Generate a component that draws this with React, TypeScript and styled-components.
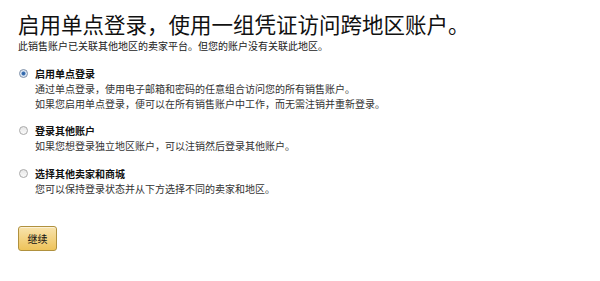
import styled, { createGlobalStyle } from "styled-components";

const GlobalStyle = createGlobalStyle`
  body {
    margin: 0;
    background: #ffffff;
    font-family: "Noto Sans CJK SC", "Liberation Sans", sans-serif;
    color: #111;
  }
`;

const Page = styled.div`
  padding: 11px 18px 0 18px;
`;

const Title = styled.h1`
  margin: 0;
  font-size: 21.5px;
  line-height: 26px;
  font-weight: 400;
  color: #111;
  white-space: nowrap;
`;

const Subtitle = styled.p`
  margin: 2px 0 0 0;
  font-size: 10px;
  line-height: 14px;
  color: #222;
`;

const OptionList = styled.div`
  display: flex;
  flex-direction: column;
  gap: 12.5px;
  margin-top: 12.5px;
`;

const Option = styled.label`
  display: grid;
  grid-template-columns: 17px 1fr;
  align-items: start;
  cursor: pointer;
`;

const RadioSlot = styled.div`
  height: 15px;
  display: flex;
  align-items: center;
  padding-left: 1px;
`;

interface RadioProps {
  $checked?: boolean;
}

const Radio = styled.span<RadioProps>`
  width: 9px;
  height: 9px;
  border-radius: 50%;
  box-sizing: border-box;
  border: 1px solid ${({ $checked }) => ($checked ? "#7d8fa8" : "#a9a9a9")};
  background: ${({ $checked }) =>
    $checked
      ? "radial-gradient(circle at 50% 50%, #2e5f9e 0, #3c74b8 1.6px, #d7e3f1 2.4px, #f4f6fa 100%)"
      : "linear-gradient(#e6e6e6, #fbfbfb)"};
`;

const Body = styled.div`
  display: flex;
  flex-direction: column;
`;

const Label = styled.div`
  font-size: 10px;
  line-height: 15px;
  font-weight: 700;
  color: #111;
`;

const Desc = styled.div`
  font-size: 10px;
  line-height: 15px;
  color: #333;
`;

const Button = styled.button`
  margin-top: 30px;
  width: 39px;
  height: 25px;
  padding: 0;
  border: 1px solid #b0913e;
  border-radius: 3px;
  background: linear-gradient(#f8e3ad, #eec35a);
  box-shadow: inset 0 1px 0 rgba(255, 255, 255, 0.5);
  font-family: "Noto Sans CJK SC", sans-serif;
  font-size: 10px;
  color: #111;
  cursor: pointer;
`;

interface OptionItem {
  label: string;
  lines: string[];
  checked?: boolean;
}

const options: OptionItem[] = [
  {
    label: "启用单点登录",
    lines: [
      "通过单点登录，使用电子邮箱和密码的任意组合访问您的所有销售账户。",
      "如果您启用单点登录，便可以在所有销售账户中工作，而无需注销并重新登录。",
    ],
    checked: true,
  },
  {
    label: "登录其他账户",
    lines: ["如果您想登录独立地区账户，可以注销然后登录其他账户。"],
  },
  {
    label: "选择其他卖家和商城",
    lines: ["您可以保持登录状态并从下方选择不同的卖家和地区。"],
  },
];

const App = () => {
  return (
    <Page>
      <GlobalStyle />
      <Title>启用单点登录，使用一组凭证访问跨地区账户。</Title>
      <Subtitle>此销售账户已关联其他地区的卖家平台。但您的账户没有关联此地区。</Subtitle>
      <OptionList>
        {options.map((o) => (
          <Option key={o.label}>
            <RadioSlot>
              <Radio $checked={o.checked} />
            </RadioSlot>
            <Body>
              <Label>{o.label}</Label>
              {o.lines.map((l) => (
                <Desc key={l}>{l}</Desc>
              ))}
            </Body>
          </Option>
        ))}
      </OptionList>
      <Button>继续</Button>
    </Page>
  );
};

export default App;
